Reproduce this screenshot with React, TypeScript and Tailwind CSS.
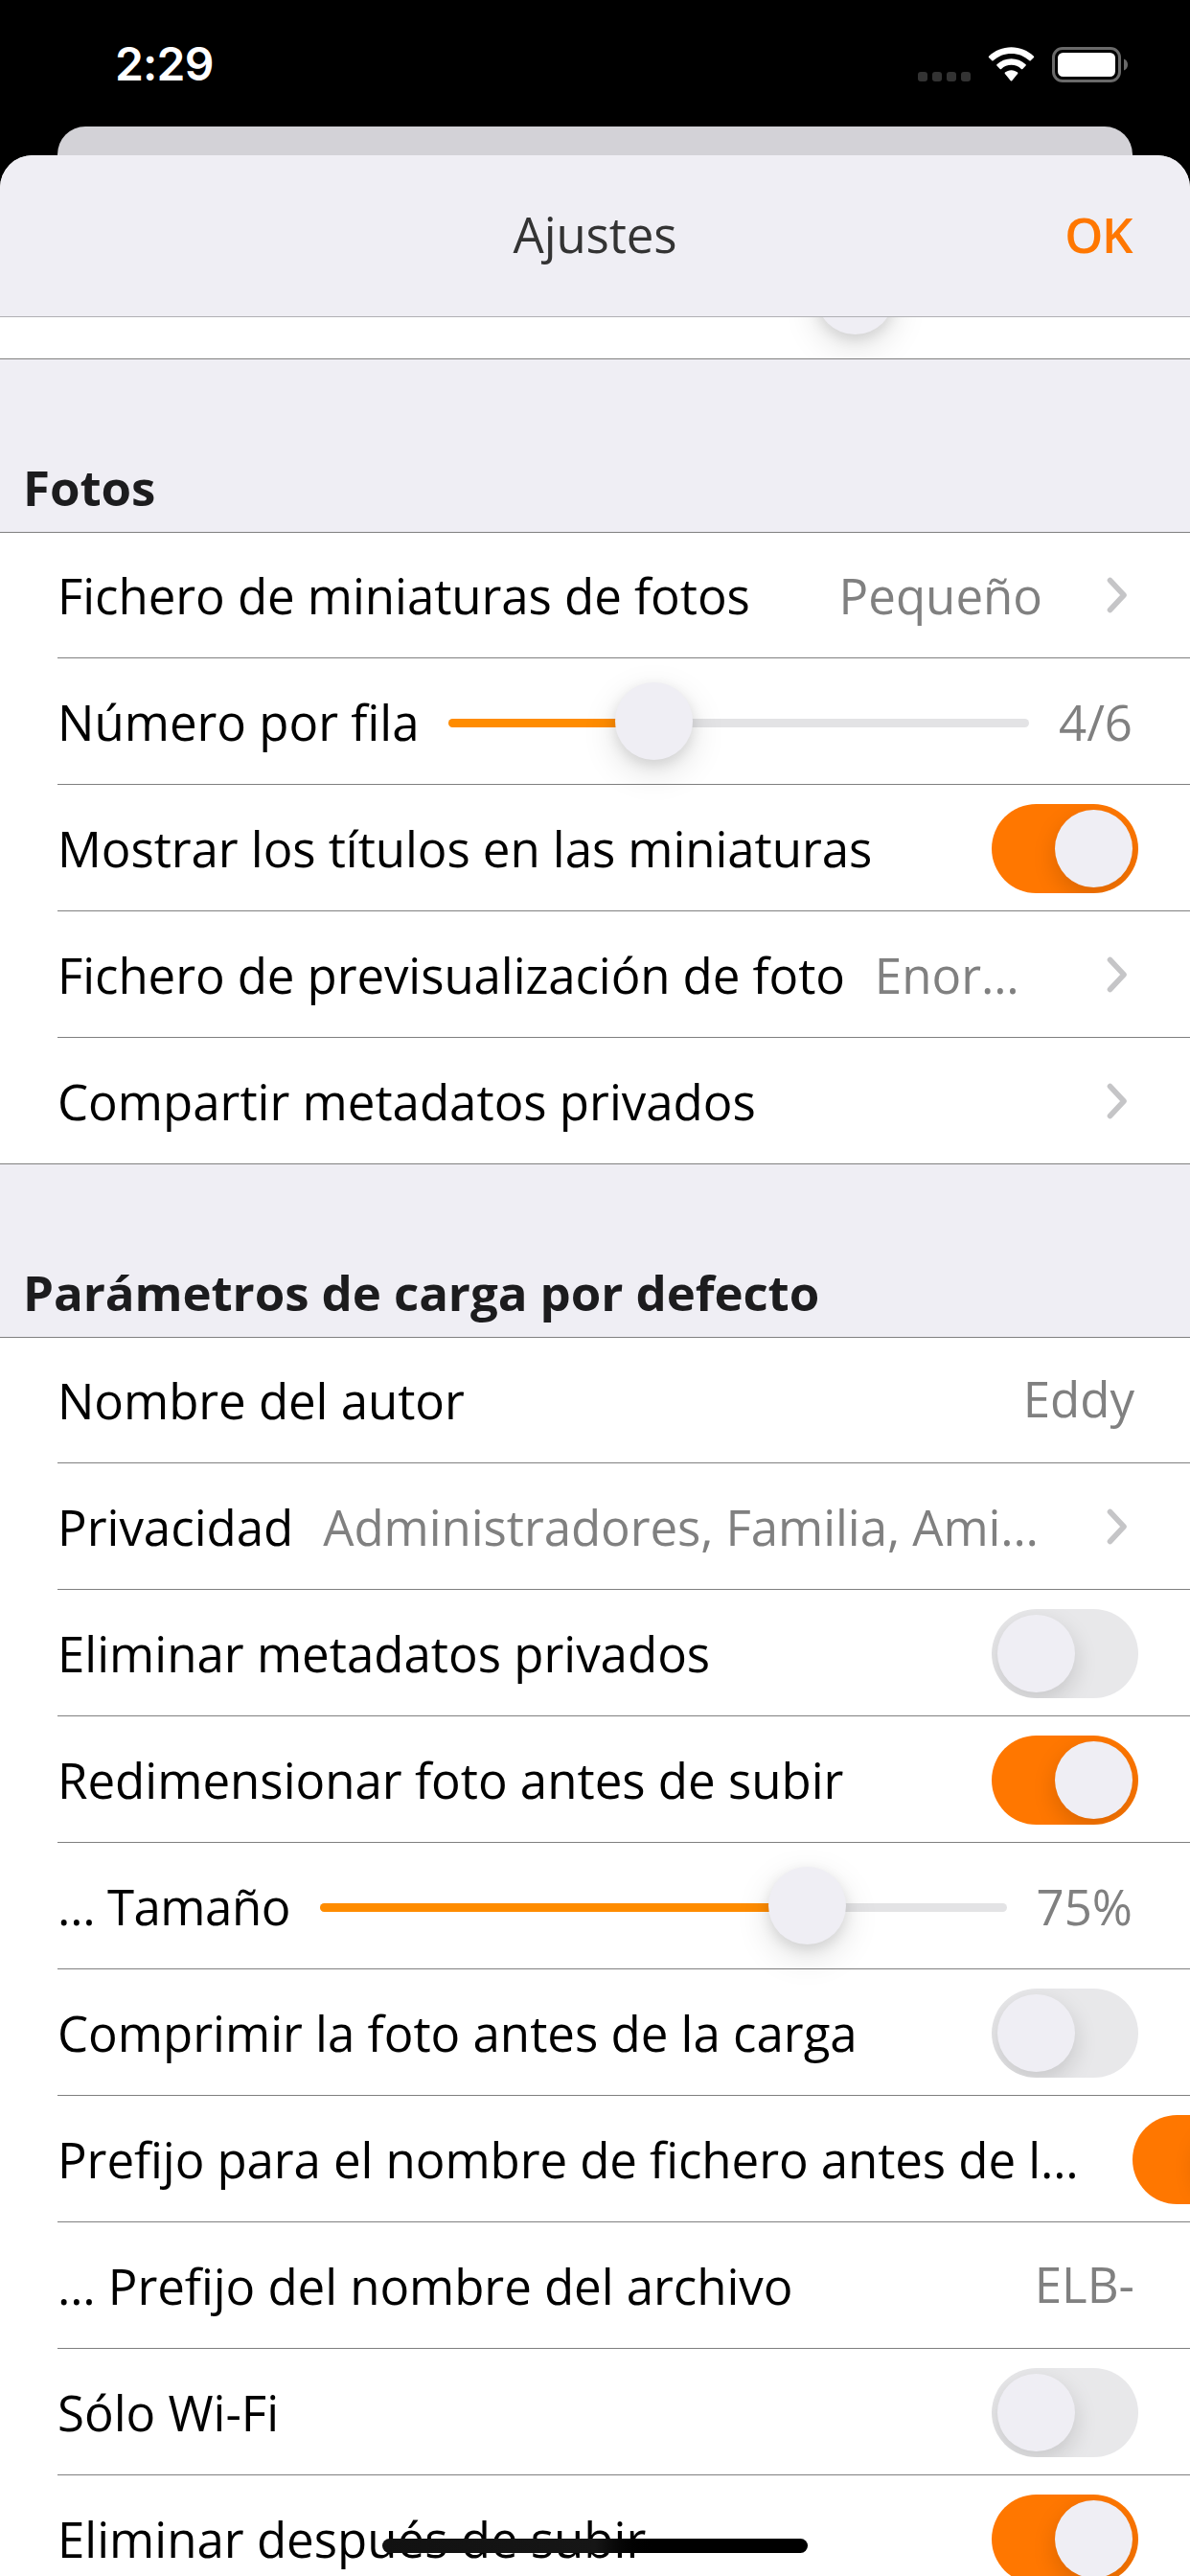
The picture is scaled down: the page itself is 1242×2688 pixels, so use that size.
import type { ReactNode } from "react";

function StatusBar() {
  return (
    <div className="flex h-[132px] items-start justify-between bg-black pl-[120px] pr-[64px]">
      <span className="mt-[38px] font-['Inter'] text-[48px] font-semibold leading-[58px] tracking-[-0.8px] text-white">
        2:29
      </span>
      <div className="mt-[49px] flex h-[37px] items-start">
        <div className="mt-[26px] flex gap-[5px]">
          <i className="h-[10px] w-[10px] rounded-[3px] bg-[#333333]" />
          <i className="h-[10px] w-[10px] rounded-[3px] bg-[#333333]" />
          <i className="h-[10px] w-[10px] rounded-[3px] bg-[#333333]" />
          <i className="h-[10px] w-[10px] rounded-[3px] bg-[#333333]" />
        </div>
        <svg className="ml-[18px]" width="49" height="37" viewBox="0 0 49 37" fill="#fff">
          <path d="M24.5 0.3C33.4 0.3 41.7 3.7 48 9.7Q48.6 10.3 48 11L44.7 14.3Q44.1 14.9 43.4 14.3C38.2 9.4 31.6 6.9 24.5 6.9C17.4 6.9 10.8 9.4 5.6 14.3Q4.9 14.9 4.3 14.3L1 11Q0.4 10.3 1 9.7C7.3 3.7 15.6 0.3 24.5 0.3Z" />
          <path d="M24.5 12.2C30.2 12.2 35.5 14.4 39.6 18.2Q40.3 18.9 39.6 19.6L36.3 22.9Q35.6 23.5 34.9 22.9C32 20.3 28.4 18.8 24.5 18.8C20.6 18.8 17 20.3 14.1 22.9Q13.4 23.5 12.7 22.9L9.4 19.6Q8.7 18.9 9.4 18.2C13.5 14.4 18.8 12.2 24.5 12.2Z" />
          <path d="M24.5 24.2C27 24.2 29.3 25.1 31.1 26.6Q31.8 27.3 31.1 28L25.2 35.2Q24.5 35.9 23.8 35.2L17.9 28Q17.2 27.3 17.9 26.6C19.7 25.1 22 24.2 24.5 24.2Z" />
        </svg>
        <svg className="ml-[18px]" width="80" height="37" viewBox="0 0 80 37">
          <rect x="1.5" y="1.5" width="69" height="34" rx="9.5" fill="none" stroke="#6a6a6a" strokeWidth="3" />
          <rect x="6" y="6" width="60" height="25" rx="5.5" fill="#fff" />
          <path d="M75 12.5C77.600 13.500 79 15.800 79 18.500C79 21.200 77.600 23.500 75 24.500Z" fill="#6a6a6a" />
        </svg>
      </div>
    </div>
  );
}

function Thumb({ className = "" }: { className?: string }) {
  return (
    <div
      className={`h-[81px] w-[81px] rounded-full bg-[#efeef4] shadow-[0_12px_36px_rgba(0,0,0,0.13),0_5px_14px_rgba(0,0,0,0.1)] ${className}`}
    />
  );
}

function Switch({ on = false }: { on?: boolean }) {
  return (
    <div
      className={`mt-[2px] flex h-[93px] w-[153px] shrink-0 items-center overflow-hidden rounded-full px-[6px] ${
        on ? "justify-end bg-[#ff7700]" : "justify-start bg-[#e8e8ea]"
      }`}
    >
      <div className="h-[81px] w-[81px] rounded-full bg-[#efeef4] shadow-[0_9px_24px_rgba(0,0,0,0.15)]" />
    </div>
  );
}

function Slider({ fill }: { fill: number }) {
  return (
    <div className="relative h-[81px] min-w-0 flex-1">
      <div className="mt-[38px] h-[9px] overflow-hidden rounded-full bg-[#e3e3e5]">
        <div className="h-full bg-[#ff8c00]" style={{ width: `${fill}px` }} />
      </div>
      <div className="absolute top-0" style={{ left: `${fill - 40}px` }}>
        <Thumb />
      </div>
    </div>
  );
}

function Chevron() {
  return (
    <svg className="shrink-0" width="22" height="38" viewBox="0 0 22 38" fill="none">
      <path d="M3.500 3.500L18 19L3.500 34.500" stroke="#c5c5c7" strokeWidth="5.600" strokeLinecap="round" strokeLinejoin="round" />
    </svg>
  );
}

function Row({
  label,
  children,
  first = false,
  last = false,
  pad = "pr-[54px]",
  labelClass = "",
}: {
  label: string;
  children?: ReactNode;
  first?: boolean;
  last?: boolean;
  pad?: string;
  labelClass?: string;
}) {
  return (
    <div className={`${first ? "h-[131px]" : "h-[132px]"} ${last ? "border-b border-[#808080]" : "pl-[60px]"}`}>
      <div
        className={`flex h-full items-center justify-between ${last ? "pl-[60px]" : "border-b border-[#808080]"} ${pad}`}
      >
        <span className={`shrink-0 whitespace-nowrap text-black ${labelClass}`}>{label}</span>
        {children}
      </div>
    </div>
  );
}

function Value({ children, className = "" }: { children: ReactNode; className?: string }) {
  return <span className={`whitespace-nowrap text-[#808080] ${className}`}>{children}</span>;
}

function SectionHeader({ title }: { title: string }) {
  return (
    <div className="flex h-[181px] items-end border-b border-[#808080] bg-[#efeef4] pb-[12px] pl-[24px]">
      <h2 className="font-bold leading-[70px] tracking-[-0.08px] text-[#1c1c1e]">{title}</h2>
    </div>
  );
}

export default function App() {
  return (
    <div className="relative h-[2688px] w-[1242px] overflow-hidden bg-black font-['Open_Sans',sans-serif] text-[51px] leading-[70px]">
      <StatusBar />
      <div className="mx-[60px] h-[30px] rounded-t-[29px] bg-[#d3d2d7]" />
      <div className="overflow-hidden rounded-t-[34px] bg-white">
        <header className="relative z-10 grid h-[169px] grid-cols-3 items-center border-b border-[#b0b0b4] bg-[#efeef4] px-[60px] pb-[4px]">
          <span />
          <h1 className="text-center tracking-[-0.15px] text-[#333333]">Ajustes</h1>
          <span className="pr-px text-right font-semibold tracking-[-1.5px] text-[#ff7700]">OK</span>
        </header>

        <div className="h-[44px] overflow-hidden border-b border-[#808080]">
          <Thumb className="ml-[852px] mt-[-63px]" />
        </div>

        <SectionHeader title="Fotos" />
        <Row label="Fichero de miniaturas de fotos" first pad="pr-[65px]" labelClass="tracking-[-0.05px]">
          <Value className="ml-auto mr-[67px]">Pequeño</Value>
          <Chevron />
        </Row>
        <Row label="Número por fila" pad="pr-[60px]">
          <div className="ml-[30px] mr-[31px] flex flex-1">
            <Slider fill={214} />
          </div>
          <Value>4/6</Value>
        </Row>
        <Row label="Mostrar los títulos en las miniaturas" labelClass="tracking-[-0.06px]">
          <Switch on />
        </Row>
        <Row label="Fichero de previsualización de foto" pad="pr-[65px]" labelClass="tracking-[-0.08px]">
          <Value className="ml-[31px] mr-auto">Enor…</Value>
          <Chevron />
        </Row>
        <Row label="Compartir metadatos privados" last pad="pr-[65px]">
          <Chevron />
        </Row>

        <SectionHeader title="Parámetros de carga por defecto" />
        <Row label="Nombre del autor" first pad="pr-[58px]" labelClass="tracking-[-0.05px]">
          <Value className="mb-[4px]">Eddy</Value>
        </Row>
        <Row label="Privacidad" pad="pr-[65px]">
          <Value className="ml-[31px] mr-auto tracking-[-0.07px]">Administradores, Familia, Ami…</Value>
          <Chevron />
        </Row>
        <Row label="Eliminar metadatos privados">
          <Switch />
        </Row>
        <Row label="Redimensionar foto antes de subir">
          <Switch on />
        </Row>
        <Row label="… Tamaño" pad="pr-[60px]" labelClass="tracking-[-0.5px]">
          <div className="ml-[31px] mr-[31px] flex flex-1">
            <Slider fill={508} />
          </div>
          <Value>75%</Value>
        </Row>
        <Row label="Comprimir la foto antes de la carga">
          <Switch />
        </Row>
        <Row label="Prefijo para el nombre de fichero antes de l…" pad="pr-0" labelClass="w-[1122px] tracking-[-0.07px]">
          <Switch on />
        </Row>
        <Row label="… Prefijo del nombre del archivo" pad="pr-[58px]" labelClass="tracking-[-0.05px]">
          <Value className="mb-[4px]">ELB-</Value>
        </Row>
        <Row label="Sólo Wi-Fi">
          <Switch />
        </Row>
        <Row label="Eliminar después de subir">
          <Switch on />
        </Row>
      </div>
      <div className="absolute left-[399px] top-[2649px] z-20 h-[15px] w-[444px] rounded-full bg-gradient-to-r from-[#111111] via-[#161616] via-50% to-black to-65%" />
    </div>
  );
}
